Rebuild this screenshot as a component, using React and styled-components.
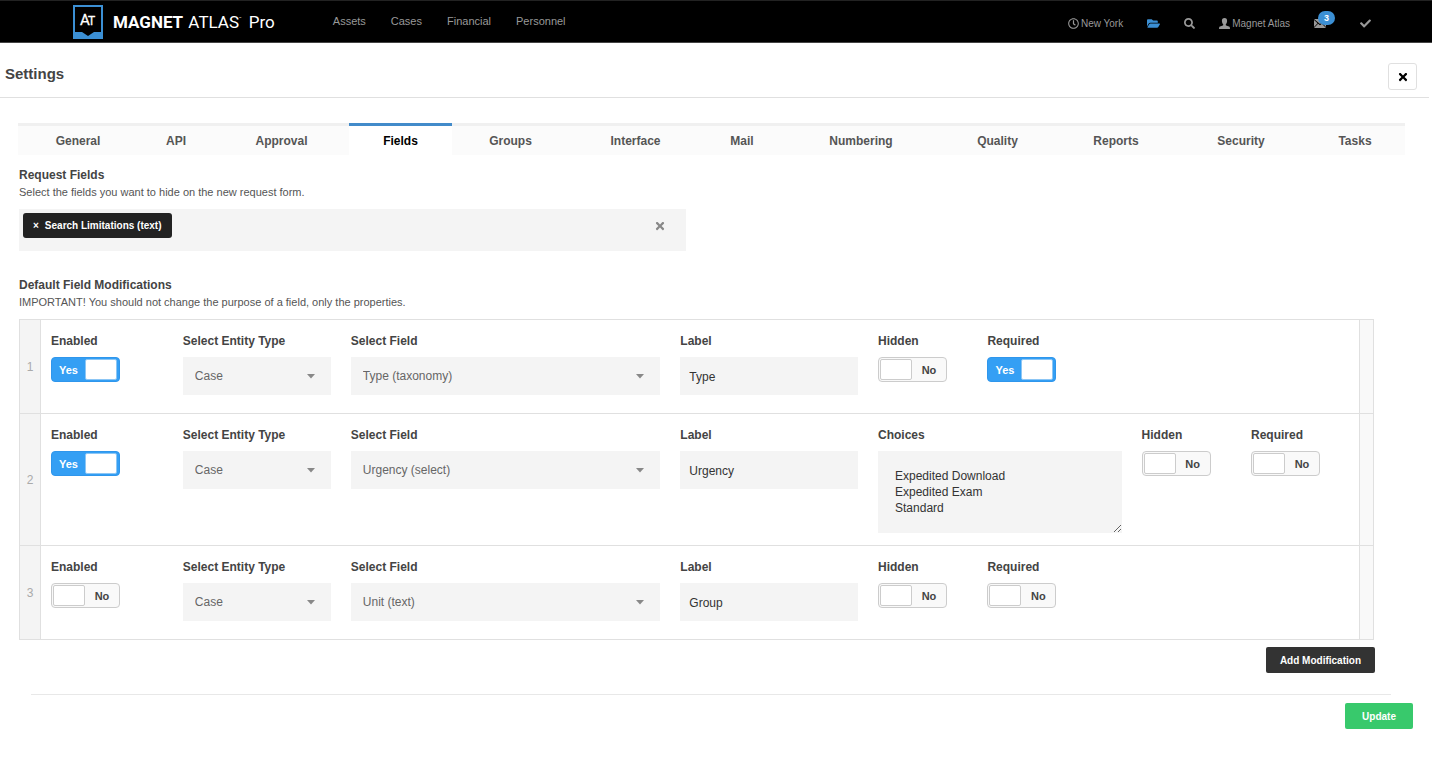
import { useState } from 'react';
import styled, { createGlobalStyle } from 'styled-components';
import { FaCheck, FaFolderOpen, FaRegClock, FaSearch, FaTimes } from 'react-icons/fa';

const GlobalStyle = createGlobalStyle`
    * {
        box-sizing: border-box;
    }
    body {
        margin: 0;
        background: #ffffff;
        color: #444;
        font-family: "Liberation Sans", Arial, sans-serif;
        font-size: 12px;
    }
    button, input, select, textarea {
        font-family: inherit;
    }
`;

const Header = styled.header`
    display: flex;
    align-items: center;
    height: 43px;
    padding: 0 61px 0 73px;
    background: #000;
    border-top: 1px solid #222;
    border-bottom: 1px solid #444;
`;

const Brand = styled.a`
    display: flex;
    align-items: center;
    gap: 10px;
    color: #fff;
    font-family: Roboto, sans-serif;
    font-size: 17px;
    line-height: 20px;
    text-decoration: none;
    white-space: nowrap;
`;

const BrandName = styled.span`
    padding-bottom: 3px;
    b {
        margin-right: 1px;
        font-weight: 700;
    }
    sup {
        margin-right: 3px;
        font-size: 4px;
        vertical-align: 8px;
    }
`;

const Nav = styled.nav`
    display: flex;
    flex: 1;
    gap: 25px;
    margin-left: 58px;
    padding-bottom: 1px;
    a {
        color: #999;
        font-size: 11px;
        text-decoration: none;
    }
`;

const Tools = styled.div`
    display: flex;
    align-items: center;
    gap: 24px;
    padding-top: 3px;
`;

const Tool = styled.a`
    position: relative;
    display: flex;
    align-items: center;
    gap: 2px;
    color: ${({ active }) => (active ? '#3b8fd4' : '#999')};
    font-size: 10px;
    text-decoration: none;
    white-space: nowrap;
    margin-right: ${({ wide }) => (wide ? '10px' : '0')};
`;

const Badge = styled.span`
    position: absolute;
    left: 4px;
    top: -8px;
    width: 17px;
    height: 14px;
    border-radius: 7px;
    background: #3b8fd4;
    color: #fff;
    font-size: 9px;
    font-weight: 700;
    line-height: 14px;
    text-align: center;
`;

const TitleBar = styled.div`
    display: flex;
    align-items: flex-end;
    justify-content: space-between;
    height: 55px;
    margin-right: 3px;
    padding: 0 12px 7px 5px;
    border-bottom: 1px solid #e0e0e0;
`;

const Title = styled.h1`
    margin: 0;
    padding-bottom: 8px;
    font-size: 15px;
    font-weight: 700;
`;

const CloseButton = styled.button`
    display: flex;
    align-items: center;
    justify-content: center;
    width: 29px;
    height: 27px;
    padding: 0;
    border: 1px solid #e0e0e0;
    border-radius: 3px;
    background: #fff;
    color: #000;
    cursor: pointer;
`;

const Tabs = styled.div`
    display: flex;
    margin: 25px 27px 0 18px;
`;

const Tab = styled.button`
    flex: ${({ grow }) => grow} 1 0;
    min-width: 0;
    height: 32px;
    padding: 1px 0 0;
    border: 0;
    border-top: 3px solid ${({ active }) => (active ? '#428bca' : '#f0f0f0')};
    background: ${({ active }) => (active ? '#fff' : '#fbfbfb')};
    color: ${({ active }) => (active ? '#000' : '#555')};
    font-size: 12px;
    font-weight: 700;
    cursor: pointer;
`;

const Section = styled.section`
    margin: ${({ top }) => top} 58px 0 19px;
`;

const Heading = styled.h2`
    margin: 0 0 1px;
    font-size: 12px;
    font-weight: 700;
    line-height: 16px;
`;

const Help = styled.p`
    margin: 0 0 9px;
    color: #555;
    font-size: 11px;
    line-height: 16px;
`;

const TagBox = styled.div`
    display: flex;
    align-items: flex-start;
    justify-content: space-between;
    width: 49.2%;
    min-height: 42px;
    padding: 4px 20px 4px 4px;
    background: #f4f4f4;
`;

const Tag = styled.button`
    height: 25px;
    padding: 0 10px;
    border: 0;
    border-radius: 3px;
    background: #222;
    color: #fff;
    font-size: 10px;
    font-weight: 700;
    cursor: pointer;
    span {
        margin-right: 6px;
    }
`;

const ClearButton = styled.button`
    display: flex;
    align-items: center;
    height: 25px;
    padding: 0;
    border: 0;
    background: none;
    color: #888;
    cursor: pointer;
`;

const Rows = styled.div`
    border: 1px solid #e0e0e0;
`;

const Row = styled.div`
    display: flex;
    & + & {
        border-top: 1px solid #e0e0e0;
    }
`;

const RowOrder = styled.div`
    display: flex;
    align-items: center;
    justify-content: center;
    flex: 0 0 21px;
    background: #f4f4f4;
    border-right: 1px solid #e0e0e0;
    color: #aaa;
`;

const RowEnd = styled.div`
    flex: 0 0 14px;
    background: #f9f9f9;
    border-left: 1px solid #e0e0e0;
`;

const RowFields = styled.div`
    display: flex;
    flex: 1;
    padding: 13px 0 12px;
`;

const Cell = styled.div`
    flex: 0 0 ${({ basis }) => basis};
    padding: 0 10px;
`;

const Caption = styled.label`
    display: block;
    margin-bottom: 8px;
    font-weight: 700;
    line-height: 16px;
    white-space: nowrap;
`;

const SelectWrap = styled.div`
    position: relative;
    margin-bottom: 6px;
    svg {
        position: absolute;
        right: 16px;
        top: 17px;
        pointer-events: none;
    }
`;

const Select = styled.select`
    appearance: none;
    display: block;
    width: 100%;
    height: 38px;
    padding: 0 12px;
    border: 0;
    border-radius: 0;
    background: #f4f4f4;
    color: #666;
    font-size: 12px;
`;

const Input = styled.input`
    display: block;
    width: 100%;
    height: 38px;
    margin-bottom: 6px;
    padding: 2px 9px 0;
    border: 0;
    background: #f4f4f4;
    color: #333;
    font-size: 12px;
`;

const TextArea = styled.textarea`
    display: block;
    width: 100%;
    height: 82px;
    padding: 17px;
    border: 0;
    background: #f4f4f4;
    color: #333;
    font-size: 12px;
    line-height: 16px;
`;

const SwitchFace = styled.div`
    position: relative;
    display: flex;
    flex-direction: ${({ on }) => (on ? 'row' : 'row-reverse')};
    align-items: center;
    width: 69px;
    height: 25px;
    padding: 0 ${({ on }) => (on ? '2px 0 0' : '0 0 1px')};
    border: 1px solid ${({ on }) => (on ? '#2f96ec' : '#ccc')};
    border-radius: 4px;
    background: ${({ on }) => (on ? '#349ff4' : '#f9f9f9')};
    color: ${({ on }) => (on ? '#fff' : '#444')};
    font-size: 11px;
    font-weight: 700;
    span {
        flex: 1;
        text-align: center;
    }
    input {
        position: absolute;
        inset: 0;
        width: 100%;
        height: 100%;
        margin: 0;
        opacity: 0;
        cursor: pointer;
    }
`;

const Knob = styled.i`
    width: 32px;
    height: 21px;
    border: 1px solid ${({ on }) => (on ? '#8cc6f5' : '#ccc')};
    border-radius: 2px;
    background: #fff;
`;

const Actions = styled.div`
    display: flex;
    justify-content: flex-end;
    margin: ${({ edge }) => edge};
`;

const Button = styled.button`
    height: 26px;
    padding: 0 ${({ primary }) => (primary ? '17px' : '14px')};
    border: 0;
    border-radius: 2px;
    background: ${({ primary }) => (primary ? '#38c96c' : '#333')};
    color: #fff;
    font-size: 10px;
    font-weight: 700;
    cursor: pointer;
`;

const Divider = styled.hr`
    height: 1px;
    margin: 21px 41px 8px 31px;
    border: 0;
    background: #e8e8e8;
`;

const tabs = [
    { name: 'General', grow: 120 },
    { name: 'API', grow: 76 },
    { name: 'Approval', grow: 135 },
    { name: 'Fields', grow: 103 },
    { name: 'Groups', grow: 117 },
    { name: 'Interface', grow: 133 },
    { name: 'Mail', grow: 80 },
    { name: 'Numbering', grow: 158 },
    { name: 'Quality', grow: 115 },
    { name: 'Reports', grow: 122 },
    { name: 'Security', grow: 128 },
    { name: 'Tasks', grow: 100 },
];

const modifications = [
    { id: 1, enabled: true, entity: 'Case', field: 'Type (taxonomy)', label: 'Type', hidden: false, required: true },
    {
        id: 2,
        enabled: true,
        entity: 'Case',
        field: 'Urgency (select)',
        label: 'Urgency',
        choices: 'Expedited Download\nExpedited Exam\nStandard',
        hidden: false,
        required: false,
    },
    { id: 3, enabled: false, entity: 'Case', field: 'Unit (text)', label: 'Group', hidden: false, required: false },
];

const Logo = () => (
    <svg width="30" height="34" viewBox="0 0 30 34" aria-hidden="true">
        <path d="M0 0H30V34H0Z" fill="#3b8fd4" />
        <path d="M2 2H28V27H21L15 31L9 27H2Z" fill="#000" />
        <text x="7" y="20" fill="#fff" stroke="#fff" strokeWidth=".3" fontFamily="Roboto, sans-serif" fontSize="15">A</text>
        <text x="15" y="20" fill="#fff" stroke="#fff" strokeWidth=".3" fontFamily="Roboto, sans-serif" fontSize="12">T</text>
    </svg>
);

const UserIcon = () => (
    <svg width="11" height="11" viewBox="0 0 11 11" fill="currentColor" aria-hidden="true">
        <path d="M5.5 0C7.3 0 8.2 1.2 8.1 3C8 4.600 7.500 5.500 6.800 6.200V7.300C8 8 10.500 8.300 10.800 9.300L11 11H0L.2 9.300C.5 8.300 3 8 4.200 7.300V6.200C3.500 5.500 3 4.600 2.900 3C2.800 1.200 3.700 0 5.500 0Z" />
    </svg>
);

const MailIcon = () => (
    <svg width="12" height="9" viewBox="0 0 12 9" fill="currentColor" aria-hidden="true">
        <path d="M0 0H12L6 5Z" />
        <path d="M0 1L3.600 4.200L0 7.900Z" />
        <path d="M12 1L8.400 4.200L12 7.900Z" />
        <path d="M4.100 4.700L6 6.200L7.900 4.700L12 9H0Z" />
    </svg>
);

const Caret = () => (
    <svg width="8" height="5" viewBox="0 0 8 5" aria-hidden="true">
        <path d="M0 0H8L4 4.500Z" fill="#888" />
    </svg>
);

const Switch = ({ id, title, basis, initial }) => {
    const [ on, setOn ] = useState(initial);

    return (
        <Cell basis={basis}>
            <Caption htmlFor={id}>{title}</Caption>
            <SwitchFace on={on ? 1 : undefined}>
                <span>{on ? 'Yes' : 'No'}</span>
                <Knob on={on ? 1 : undefined} />
                <input id={id} type="checkbox" checked={on} onChange={() => setOn(!on)} />
            </SwitchFace>
        </Cell>
    );
};

const Dropdown = ({ id, title, basis, value }) => (
    <Cell basis={basis}>
        <Caption htmlFor={id}>{title}</Caption>
        <SelectWrap>
            <Select id={id} defaultValue={value}>
                <option>{value}</option>
            </Select>
            <Caret />
        </SelectWrap>
    </Cell>
);

const Modification = ({ item }) => (
    <Row>
        <RowOrder>{item.id}</RowOrder>
        <RowFields>
            <Switch id={`enabled-${item.id}`} title="Enabled" basis="10%" initial={item.enabled} />
            <Dropdown id={`entity-${item.id}`} title="Select Entity Type" basis="12.75%" value={item.entity} />
            <Dropdown id={`field-${item.id}`} title="Select Field" basis="25%" value={item.field} />
            <Cell basis="15%">
                <Caption htmlFor={`label-${item.id}`}>Label</Caption>
                <Input id={`label-${item.id}`} defaultValue={item.label} />
            </Cell>
            {item.choices && (
                <Cell basis="20%">
                    <Caption htmlFor={`choices-${item.id}`}>Choices</Caption>
                    <TextArea id={`choices-${item.id}`} defaultValue={item.choices} />
                </Cell>
            )}
            <Switch id={`hidden-${item.id}`} title="Hidden" basis="8.3%" initial={item.hidden} />
            <Switch id={`required-${item.id}`} title="Required" basis="8.3%" initial={item.required} />
        </RowFields>
        <RowEnd />
    </Row>
);

const App = () => {
    const [ activeTab, setActiveTab ] = useState('Fields');
    const [ hiddenFields, setHiddenFields ] = useState(['Search Limitations (text)']);

    return (
        <>
            <GlobalStyle />
            <Header>
                <Brand href="#">
                    <Logo />
                    <BrandName><b>MAGNET</b> ATLAS<sup>™</sup> Pro</BrandName>
                </Brand>
                <Nav>
                    <a href="#assets">Assets</a>
                    <a href="#cases">Cases</a>
                    <a href="#financial">Financial</a>
                    <a href="#personnel">Personnel</a>
                </Nav>
                <Tools>
                    <Tool href="#location"><FaRegClock size={11} />New York</Tool>
                    <Tool href="#files" active="true" aria-label="Files"><FaFolderOpen size={13} /></Tool>
                    <Tool href="#search" aria-label="Search"><FaSearch size={11} /></Tool>
                    <Tool href="#account"><UserIcon />Magnet Atlas</Tool>
                    <Tool href="#messages" wide="true" aria-label="Messages"><MailIcon /><Badge>3</Badge></Tool>
                    <Tool href="#tasks" aria-label="Tasks"><FaCheck size={11} /></Tool>
                </Tools>
            </Header>
            <TitleBar>
                <Title>Settings</Title>
                <CloseButton aria-label="Close"><FaTimes size={12} /></CloseButton>
            </TitleBar>
            <Tabs role="tablist">
                {tabs.map(({ name, grow }) => (
                    <Tab
                        key={name}
                        role="tab"
                        grow={grow}
                        active={name === activeTab ? 1 : undefined}
                        aria-selected={name === activeTab}
                        onClick={() => setActiveTab(name)}
                    >
                        {name}
                    </Tab>
                ))}
            </Tabs>
            <Section top="12px">
                <Heading>Request Fields</Heading>
                <Help>Select the fields you want to hide on the new request form.</Help>
                <TagBox>
                    <div>
                        {hiddenFields.map((name) => (
                            <Tag key={name} onClick={() => setHiddenFields(hiddenFields.filter((f) => f !== name))}>
                                <span>×</span>{name}
                            </Tag>
                        ))}
                    </div>
                    <ClearButton aria-label="Clear all" onClick={() => setHiddenFields([])}><FaTimes size={12} /></ClearButton>
                </TagBox>
            </Section>
            <Section top="26px">
                <Heading>Default Field Modifications</Heading>
                <Help>IMPORTANT! You should not change the purpose of a field, only the properties.</Help>
                <Rows>
                    {modifications.map((item) => <Modification key={item.id} item={item} />)}
                </Rows>
            </Section>
            <Actions edge="7px 57px 0 0">
                <Button>Add Modification</Button>
            </Actions>
            <Divider />
            <Actions edge="0 19px 0 0">
                <Button primary="true">Update</Button>
            </Actions>
        </>
    )
};

export default App;
